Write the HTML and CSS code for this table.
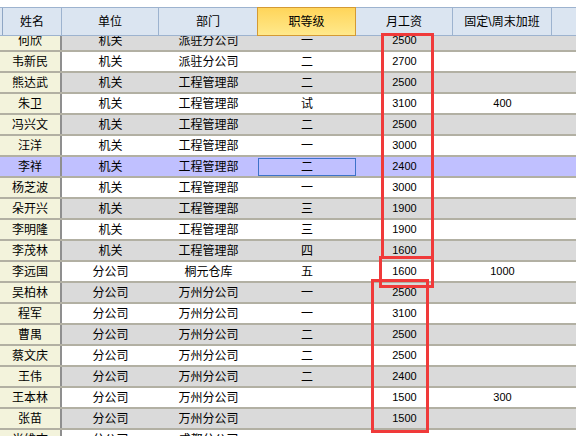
FILE: index.html
```html
<!DOCTYPE html>
<html>
<head>
<meta charset="utf-8">
<link rel="stylesheet" href="styles.css">
</head>
<body>
<div class="sheet">
  <div class="head">
    <div class="hc sliver"></div>
    <div class="hc">姓名</div>
    <div class="hc">单位</div>
    <div class="hc">部门</div>
    <div class="hc active">职等级</div>
    <div class="hc">月工资</div>
    <div class="hc">固定\周末加班</div>
    <div class="hc last"></div>
  </div>
  <div class="body">
    <div class="rows">
      <div class="row gray"><div class="c name">何欣</div><div class="c">机关</div><div class="c">派驻分公司</div><div class="c">一</div><div class="c num">2500</div><div class="c num"></div><div class="c"></div></div>
      <div class="row"><div class="c name">韦新民</div><div class="c">机关</div><div class="c">派驻分公司</div><div class="c">二</div><div class="c num">2700</div><div class="c num"></div><div class="c"></div></div>
      <div class="row gray"><div class="c name">熊达武</div><div class="c">机关</div><div class="c">工程管理部</div><div class="c">二</div><div class="c num">2500</div><div class="c num"></div><div class="c"></div></div>
      <div class="row"><div class="c name">朱卫</div><div class="c">机关</div><div class="c">工程管理部</div><div class="c">试</div><div class="c num">3100</div><div class="c num">400</div><div class="c"></div></div>
      <div class="row gray"><div class="c name">冯兴文</div><div class="c">机关</div><div class="c">工程管理部</div><div class="c">二</div><div class="c num">2500</div><div class="c num"></div><div class="c"></div></div>
      <div class="row"><div class="c name">汪洋</div><div class="c">机关</div><div class="c">工程管理部</div><div class="c">一</div><div class="c num">3000</div><div class="c num"></div><div class="c"></div></div>
      <div class="row sel"><div class="c name">李祥</div><div class="c">机关</div><div class="c">工程管理部</div><div class="c cur">二</div><div class="c num">2400</div><div class="c num"></div><div class="c"></div></div>
      <div class="row"><div class="c name">杨芝波</div><div class="c">机关</div><div class="c">工程管理部</div><div class="c">一</div><div class="c num">3000</div><div class="c num"></div><div class="c"></div></div>
      <div class="row gray"><div class="c name">朵开兴</div><div class="c">机关</div><div class="c">工程管理部</div><div class="c">三</div><div class="c num">1900</div><div class="c num"></div><div class="c"></div></div>
      <div class="row"><div class="c name">李明隆</div><div class="c">机关</div><div class="c">工程管理部</div><div class="c">三</div><div class="c num">1900</div><div class="c num"></div><div class="c"></div></div>
      <div class="row gray"><div class="c name">李茂林</div><div class="c">机关</div><div class="c">工程管理部</div><div class="c">四</div><div class="c num">1600</div><div class="c num"></div><div class="c"></div></div>
      <div class="row"><div class="c name">李远国</div><div class="c">分公司</div><div class="c">桐元仓库</div><div class="c">五</div><div class="c num">1600</div><div class="c num">1000</div><div class="c"></div></div>
      <div class="row gray"><div class="c name">吴柏林</div><div class="c">分公司</div><div class="c">万州分公司</div><div class="c">一</div><div class="c num">2500</div><div class="c num"></div><div class="c"></div></div>
      <div class="row"><div class="c name">程军</div><div class="c">分公司</div><div class="c">万州分公司</div><div class="c">一</div><div class="c num">3100</div><div class="c num"></div><div class="c"></div></div>
      <div class="row gray"><div class="c name">曹禺</div><div class="c">分公司</div><div class="c">万州分公司</div><div class="c">二</div><div class="c num">2500</div><div class="c num"></div><div class="c"></div></div>
      <div class="row"><div class="c name">蔡文庆</div><div class="c">分公司</div><div class="c">万州分公司</div><div class="c">二</div><div class="c num">2500</div><div class="c num"></div><div class="c"></div></div>
      <div class="row gray"><div class="c name">王伟</div><div class="c">分公司</div><div class="c">万州分公司</div><div class="c">二</div><div class="c num">2400</div><div class="c num"></div><div class="c"></div></div>
      <div class="row"><div class="c name">王本林</div><div class="c">分公司</div><div class="c">万州分公司</div><div class="c"></div><div class="c num">1500</div><div class="c num">300</div><div class="c"></div></div>
      <div class="row gray"><div class="c name">张苗</div><div class="c">分公司</div><div class="c">万州分公司</div><div class="c"></div><div class="c num">1500</div><div class="c num"></div><div class="c"></div></div>
      <div class="row"><div class="c name">肖维志</div><div class="c">分公司</div><div class="c">成都分公司</div><div class="c"></div><div class="c num"></div><div class="c num"></div><div class="c"></div></div>
    </div>
  </div>
  <div class="mark mark1"></div>
  <div class="mark mark2"></div>
  <div class="mark mark3"></div>
</div>
</body>
</html>
```
FILE: styles.css
```css
html, body {
  margin: 0;
  padding: 0;
  background: #ffffff;
}
.sheet {
  position: relative;
  width: 576px;
  height: 436px;
  overflow: hidden;
  padding-top: 7px;
  box-sizing: border-box;
  font-family: "Liberation Sans", "Noto Sans CJK SC", sans-serif;
  font-size: 12px;
  color: #000;
}
.head {
  display: grid;
  grid-template-columns: 3px 59px 97px 99px 98px 97px 99px 24px;
  height: 29px;
  box-sizing: border-box;
  background: #dbe5f1;
  border-top: 1px solid #9db3cf;
  border-bottom: 1px solid #9db3cf;
}
.hc {
  display: flex;
  align-items: center;
  justify-content: center;
  border-right: 1px solid #9db3cf;
  line-height: 1;
}
.hc.sliver {
  border-right: 1px solid #8fa6c4;
}
.hc.last {
  border-right: none;
}
.hc.active {
  background: linear-gradient(#ffd55a, #ffe98c);
  border: 1px solid #d49a34;
  margin: -1px 0 -1px -1px;
}
.body {
  height: 400px;
  overflow: hidden;
}
.rows {
  margin-top: -5px;
}
.row {
  display: grid;
  grid-template-columns: 62px 97px 99px 98px 97px 99px 24px;
  height: 21px;
  box-sizing: border-box;
  border-bottom: 2px solid #b2b0a3;
  background: #ffffff;
}
.row.gray {
  background: #dadada;
}
.row.sel {
  background: #c0c0ff;
}
.c {
  display: flex;
  align-items: center;
  justify-content: center;
  line-height: 1;
  white-space: nowrap;
}
.c.num {
  font-size: 11px;
}
.c.name {
  background: #f3f3dc;
  border-right: 2px solid #8f8f8f;
}
.row.sel .c.name {
  background: #c0c0ff;
}
.c.cur {
  box-shadow: inset 0 0 0 1px #3d72c9;
  margin: 1px 0 0 0;
}
.mark {
  position: absolute;
  border: 3px solid #f03a3a;
  box-sizing: border-box;
}
.mark1 {
  left: 381px;
  top: 33px;
  width: 53px;
  height: 226px;
}
.mark2 {
  left: 379px;
  top: 256px;
  width: 55px;
  height: 32px;
}
.mark3 {
  left: 371px;
  top: 279px;
  width: 58px;
  height: 154px;
}
```
